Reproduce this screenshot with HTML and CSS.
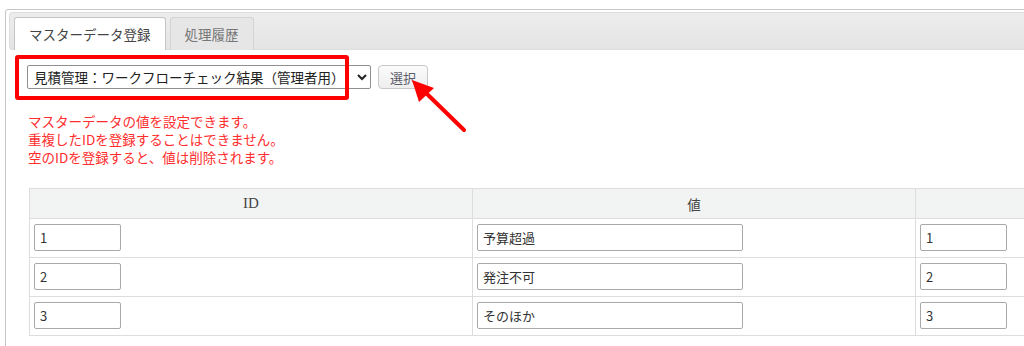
FILE: index.html
```html
<!DOCTYPE html>
<html>
  <head>
    <title>マスターデータ登録</title>
    <link rel="stylesheet" href="styles.css">
  </head>
  <body>
    <div class="tabs">
      <ul class="tab-nav">
        <li class="tab active">マスターデータ登録</li>
        <li class="tab">処理履歴</li>
      </ul>

      <div class="panel">
        <div class="select-row">
          <select class="master-select">
            <option>見積管理：ワークフローチェック結果（管理者用）</option>
          </select>
          <button type="button" class="btn">選択</button>
          <!-- annotation -->
          <div class="mark-box"></div>
        </div>

        <svg class="mark-arrow" width="70" height="70" viewBox="0 0 70 70">
          <line x1="62" y1="58" x2="24" y2="21" stroke="#f00" stroke-width="4" stroke-linecap="round" />
          <polygon points="10,8 32,16 17,30" fill="#f00" />
        </svg>

        <div class="notes">
          <p>マスターデータの値を設定できます。</p>
          <p>重複したIDを登録することはできません。</p>
          <p>空のIDを登録すると、値は削除されます。</p>
        </div>

        <table class="master-table">
          <tr>
            <th>ID</th>
            <th>値</th>
            <th></th>
          </tr>
          <tr>
            <td><input type="text" class="in-short" value="1" /></td>
            <td><input type="text" class="in-long" value="予算超過" /></td>
            <td><input type="text" class="in-short" value="1" /></td>
          </tr>
          <tr>
            <td><input type="text" class="in-short" value="2" /></td>
            <td><input type="text" class="in-long" value="発注不可" /></td>
            <td><input type="text" class="in-short" value="2" /></td>
          </tr>
          <tr>
            <td><input type="text" class="in-short" value="3" /></td>
            <td><input type="text" class="in-long" value="そのほか" /></td>
            <td><input type="text" class="in-short" value="3" /></td>
          </tr>
        </table>
      </div>
    </div>
  </body>
</html>
```

FILE: styles.css
```css
html,
body {
  margin: 0;
  overflow: hidden;
  background: #fff;
}

body {
  font-family: "Noto Sans CJK JP", "Noto Sans", sans-serif;
  font-size: 13px;
  color: #333;
}

.tabs {
  margin: 9px 0 0 5px;
  width: 1200px;
  height: 400px;
  border: 1px solid #c5c5c5;
  border-radius: 3px;
  padding: 2px 3px;
}

.tab-nav {
  list-style: none;
  margin: 0;
  padding: 4px 4px 0 4px;
  display: flex;
  gap: 4px;
  background: linear-gradient(#ededed, #e4e4e4);
  border: 1px solid #dddddd;
  border-radius: 3px;
}

.tab {
  height: 32px;
  line-height: 32px;
  padding: 0 14px;
  font-size: 13.5px;
  color: #777;
  background: #e6e6e6;
  border: 1px solid #d3d3d3;
  border-bottom: none;
  border-radius: 3px 3px 0 0;
  margin-bottom: -1px;
}

.tab.active {
  color: #454545;
  background: #fff;
  border-color: #c5c5c5;
}

.panel {
  position: relative;
  padding: 15px 18px;
}

.select-row {
  position: relative;
  display: flex;
  align-items: center;
  gap: 7px;
}

.master-select {
  width: 344px;
  height: 24px;
  font-family: "Noto Sans CJK JP", sans-serif;
  font-size: 13.5px;
  color: #222;
  border: 1px solid #8f8f8f;
  border-radius: 2px;
  background: #fff;
  padding: 0 2px;
}

.btn {
  width: 50px;
  height: 24px;
  font-family: "Noto Sans CJK JP", sans-serif;
  font-size: 13px;
  color: #5a5a6a;
  background: linear-gradient(#fbfbfb, #eeeeee);
  border: 1px solid #c8c8c8;
  border-radius: 4px;
  padding: 0;
}

.mark-box {
  position: absolute;
  left: -12px;
  top: -10px;
  width: 326px;
  height: 37px;
  border: 4px solid #f00;
  border-radius: 3px;
}

.mark-arrow {
  position: absolute;
  left: 393px;
  top: 22px;
}

.notes {
  margin-top: 23px;
  color: #ff2d2d;
  font-size: 13.5px;
  line-height: 18px;
}

.notes p {
  margin: 0 0 0 1px;
}

.master-table {
  margin: 22px 0 0 2px;
  width: 1330px;
  border-collapse: collapse;
  table-layout: fixed;
}

.master-table th {
  height: 29px;
  padding: 0;
  font-family: "Liberation Serif", "Noto Sans CJK JP", serif;
  font-weight: normal;
  font-size: 15px;
  color: #444;
  background: #f2f3f3;
  border: 1px solid #dddddd;
}

.master-table th + th {
  font-family: "Noto Sans CJK JP", sans-serif;
  font-size: 13.5px;
}

.master-table td {
  padding: 5px 4px 6px 4px;
  border: 1px solid #dddddd;
  height: 27px;
}

.master-table input {
  box-sizing: border-box;
  height: 27px;
  padding: 0 5px;
  font-family: "Noto Sans CJK JP", sans-serif;
  font-size: 13px;
  color: #333;
  border: 1px solid #a9a9a9;
  border-radius: 2px;
  display: block;
}

.in-short {
  width: 87px;
}

.in-long {
  width: 266px;
}
```
